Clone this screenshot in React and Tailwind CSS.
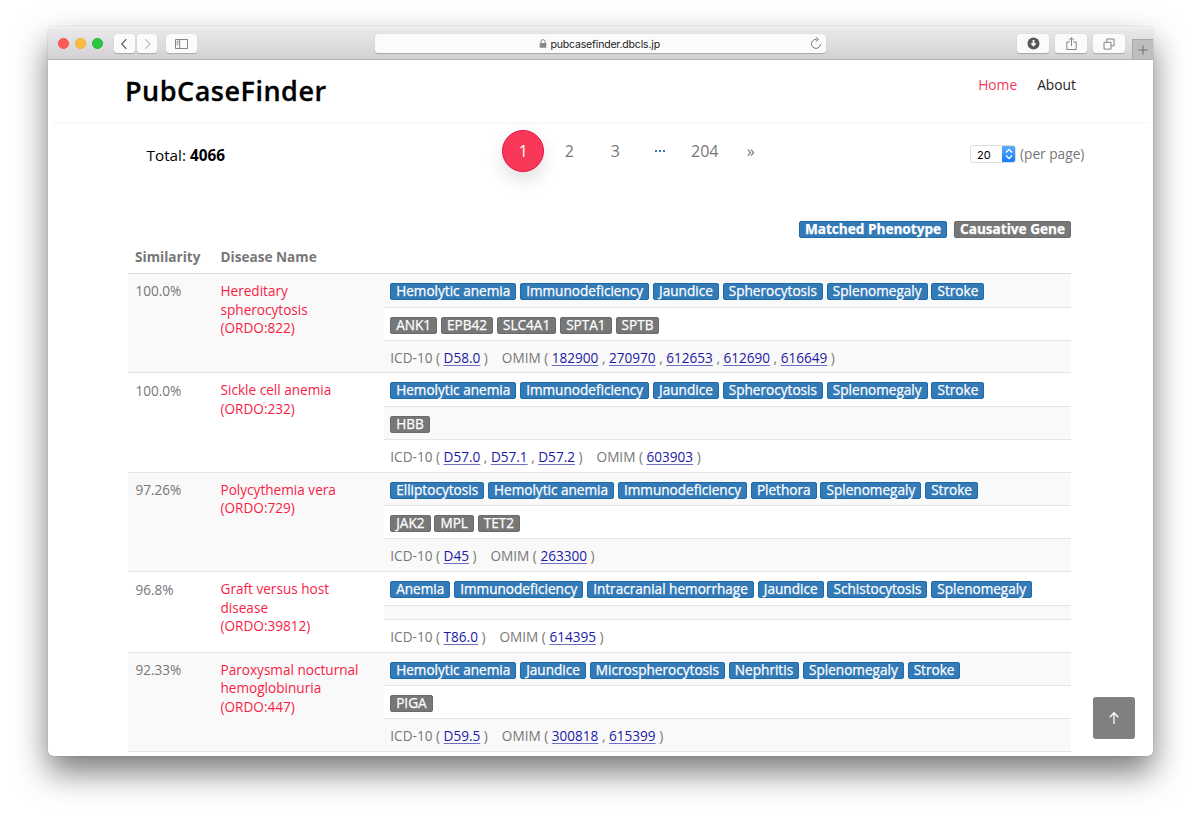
import React from "react";

const rows = [
  {
    similarity: "100.0%",
    name: ["Hereditary", "spherocytosis", "(ORDO:822)"],
    phenotypes: ["Hemolytic anemia", "Immunodeficiency", "Jaundice", "Spherocytosis", "Splenomegaly", "Stroke"],
    genes: ["ANK1", "EPB42", "SLC4A1", "SPTA1", "SPTB"],
    icd: ["D58.0"],
    omim: ["182900", "270970", "612653", "612690", "616649"],
  },
  {
    similarity: "100.0%",
    name: ["Sickle cell anemia", "(ORDO:232)"],
    phenotypes: ["Hemolytic anemia", "Immunodeficiency", "Jaundice", "Spherocytosis", "Splenomegaly", "Stroke"],
    genes: ["HBB"],
    icd: ["D57.0", "D57.1", "D57.2"],
    omim: ["603903"],
  },
  {
    similarity: "97.26%",
    name: ["Polycythemia vera", "(ORDO:729)"],
    phenotypes: ["Elliptocytosis", "Hemolytic anemia", "Immunodeficiency", "Plethora", "Splenomegaly", "Stroke"],
    genes: ["JAK2", "MPL", "TET2"],
    icd: ["D45"],
    omim: ["263300"],
  },
  {
    similarity: "96.8%",
    name: ["Graft versus host", "disease", "(ORDO:39812)"],
    phenotypes: ["Anemia", "Immunodeficiency", "Intracranial hemorrhage", "Jaundice", "Schistocytosis", "Splenomegaly"],
    genes: [],
    icd: ["T86.0"],
    omim: ["614395"],
  },
  {
    similarity: "92.33%",
    name: ["Paroxysmal nocturnal", "hemoglobinuria", "(ORDO:447)"],
    phenotypes: ["Hemolytic anemia", "Jaundice", "Microspherocytosis", "Nephritis", "Splenomegaly", "Stroke"],
    genes: ["PIGA"],
    icd: ["D59.5"],
    omim: ["300818", "615399"],
  },
];

function Tag({ children, gene }) {
  return (
    <span
      className={
        "block h-[17px] rounded-[2px] border px-[5px] text-[13.6px] leading-[14px] whitespace-nowrap text-white [-webkit-text-stroke:0.25px_white] " +
        (gene ? "border-[#6b6b6b] bg-[#777777]" : "border-[#1c6bab] bg-[#337ab7]")
      }
    >
      {children}
    </span>
  );
}

function Codes({ label, codes }) {
  return (
    <span className="whitespace-pre">
      {label} ({" "}
      {codes.map((c, i) => (
        <React.Fragment key={c}>
          {i > 0 && " , "}
          <a className="text-[#1a1aa6] underline decoration-[#6f6fc6] decoration-1 underline-offset-[1.5px]">{c}</a>
        </React.Fragment>
      ))}
      {" )"}
    </span>
  );
}

function ToolButton({ className, children }) {
  return (
    <div className={"flex h-[19px] items-center justify-center rounded-[3px] bg-[#fbfbfb] shadow-[0_0.5px_1px_rgba(0,0,0,0.22)] " + className}>
      {children}
    </div>
  );
}

function TitleBar() {
  return (
    <div className="flex h-[33px] shrink-0 items-start rounded-t-[5px] border-t border-b border-t-[#f8f8f8] border-b-[#b3b1b3] bg-linear-to-b from-[#ebe9eb] to-[#d3d1d3] pt-[6px] pl-[10px]">
      <div className="flex h-[19px] items-center gap-[6px]">
        <span className="size-[11px] rounded-full border border-[#f2504b] bg-[#fc5b57]" />
        <span className="size-[11px] rounded-full border border-[#f3af35] bg-[#fdbc40]" />
        <span className="size-[11px] rounded-full border border-[#1db537] bg-[#2ac840]" />
      </div>
      <ToolButton className="ml-[11px] w-[21px]">
        <svg width="9" height="12" viewBox="0 0 9 12" fill="none" stroke="#555" strokeWidth="1.1"><path d="M6.3 1.2 1.7 6l4.6 4.8" /></svg>
      </ToolButton>
      <ToolButton className="ml-[2px] w-[20px]">
        <svg width="9" height="12" viewBox="0 0 9 12" fill="none" stroke="#bababa" strokeWidth="1.1"><path d="M2.2 1.2 7 6l-4.8 4.8" /></svg>
      </ToolButton>
      <ToolButton className="ml-[9px] w-[31px]">
        <svg width="13" height="10" viewBox="0 0 13 10" fill="none" stroke="#777" strokeWidth="0.9"><path d="M.5.5h12v9H.5zM4.7.5v9M1.7 2.2h1.7M1.7 3.8h1.7M1.7 5.4h1.7" /></svg>
      </ToolButton>
      <div className="ml-[178px] flex h-[19px] w-[451px] items-center rounded-[3px] bg-[#fbfbfb] pl-[164px] shadow-[0_0.5px_1px_rgba(0,0,0,0.22)]">
        <svg width="8" height="9" viewBox="0 0 8 9"><rect x="0.7" y="4" width="6.6" height="4.8" rx="0.6" fill="#888" /><path d="M2 4.2V2.6a2 2 0 0 1 4 0v1.6" fill="none" stroke="#888" strokeWidth="1" /></svg>
        <span className="ml-[3.5px] w-[109px] pt-px font-[Inter,sans-serif] text-[10.5px] leading-[19px] tracking-[-0.17px] whitespace-nowrap text-[#222]">pubcasefinder.dbcls.jp</span>
        <svg className="ml-[150px]" width="12" height="13" viewBox="0 0 12 13" fill="none" stroke="#777" strokeWidth="1"><path d="M6.6 2.4A4.5 4.5 0 1 0 10.5 7" /><path d="M5.8.4 8.6 2.5 5.8 4.6" /></svg>
      </div>
      <ToolButton className="ml-[191px] w-[32px]">
        <svg width="13" height="13" viewBox="0 0 13 13"><circle cx="6.5" cy="6.5" r="6" fill="#575757" /><path d="M6.5 3v5" stroke="#fff" strokeWidth="1.8" /><path d="M3.4 6.3h6.2L6.5 9.8z" fill="#fff" /></svg>
      </ToolButton>
      <ToolButton className="ml-[6px] w-[32px]">
        <svg width="11" height="14" viewBox="0 0 11 14" fill="none" stroke="#777" strokeWidth="0.9"><path d="M3.8 5H.8v7.5h9.4V5h-3M5.5 9V1M3 3.2 5.5.8 8 3.2" /></svg>
      </ToolButton>
      <ToolButton className="ml-[6px] w-[32px]">
        <svg width="12" height="12" viewBox="0 0 12 12" fill="none" stroke="#777" strokeWidth="0.9"><path d="M1 4.3h7v6.8H1zM3.8 4.3V1h7.2v6.8H8" /></svg>
      </ToolButton>
      <div className="mt-[5px] ml-auto flex h-[20px] w-[21px] items-center justify-center border-t border-l border-[#aaa8aa] bg-[#bfbdbf]">
        <svg width="10" height="10" viewBox="0 0 10 10" stroke="#6e6e6e" strokeWidth="1"><path d="M5 .5v9M.5 5h9" /></svg>
      </div>
    </div>
  );
}

export default function App() {
  return (
    <div className="h-[824px] w-[1200px] overflow-hidden bg-white pt-[27px] pl-[48px] font-['Open_Sans',sans-serif] text-[#777]">
      <div className="flex h-[729px] w-[1105px] flex-col rounded-[5px] bg-white shadow-[0_0_1px_rgba(0,0,0,0.5),0_16px_33px_rgba(0,0,0,0.53)]">
        <TitleBar />
        <header className="mx-[4px] flex h-[64px] shrink-0 justify-between border-b-2 border-[#f9f9f9] pr-[73px] pl-[73px]">
          <h1 className="pt-[13px] text-[27px] leading-[36px] font-semibold tracking-[0.5px] text-black [-webkit-text-stroke:0.3px_black]">PubCaseFinder</h1>
          <nav className="flex gap-[20px] pt-[15px] text-[13.8px] leading-[20px]">
            <a className="text-[#f73859]">Home</a>
            <a className="text-[#222]">About</a>
          </nav>
        </header>

        <div className="flex h-[97px] shrink-0 items-start">
          <div className="w-[354px] pt-[21px] pl-[98.5px] text-[15.3px] leading-[20px] text-black">
            Total: <b className="font-bold">4066</b>
          </div>
          <div className="mt-[5.5px] ml-[100.3px] flex h-[42px] w-[419.7px] items-center text-[16px]">
            <span className="flex size-[42px] items-center justify-center rounded-full border border-[#ec0f47] bg-[#f73859] text-white shadow-[0_8px_18px_rgba(0,0,0,0.13)]">1</span>
            <span className="w-[50px] text-center">2</span>
            <span className="w-[42px] text-center">3</span>
            <span className="flex h-[2px] w-[47px] justify-center gap-[2px]">
              <i className="size-[2px] bg-[#337ab7]" />
              <i className="size-[2px] bg-[#337ab7]" />
              <i className="size-[2px] bg-[#337ab7]" />
            </span>
            <span className="w-[43px] text-center">204</span>
            <span className="w-[49px] text-center">»</span>
          </div>
          <div className="mt-[19px] ml-[48px] flex h-[22px] items-center">
            <div className="flex h-[18px] w-[46px] items-stretch overflow-hidden rounded-[3px] border border-[#ddd] bg-white">
              <span className="flex-1 pl-[6px] font-[Inter,sans-serif] text-[11px] leading-[18px] text-black">20</span>
              <span className="-mr-px flex w-[14px] items-center justify-center bg-linear-to-b from-[#5aacfb] to-[#0f7bfb]">
                <svg width="8" height="12" viewBox="0 0 8 12" fill="none" stroke="#fff" strokeWidth="1.3"><path d="M1 4.5 4 1.5l3 3M1 7.5l3 3 3-3" /></svg>
              </span>
            </div>
            <span className="ml-[4px] text-[13.7px] leading-[20px]">(per page)</span>
          </div>
        </div>

        <div className="ml-[80px] flex w-[943px] shrink-0 flex-col text-[13.6px]">
          <div className="flex h-[17px] justify-end gap-[7px] *:font-bold">
            <Tag>Matched Phenotype</Tag>
            <Tag gene>Causative Gene</Tag>
          </div>
          <div className="flex h-[35.9px] border-b border-[#ddd] pt-[8.5px] pl-[7px] leading-[20px] font-bold shadow-[0_0.5px_0_#ddd]">
            <span className="w-[85.5px]">Similarity</span>
            <span>Disease Name</span>
          </div>
          {rows.map((row, n) => {
            const odd = n % 2 === 0;
            const shade = odd ? "bg-[#f9f9f9]" : "bg-white";
            const inner = odd ? "bg-white" : "bg-[#f9f9f9]";
            return (
              <div key={n} className={"flex border-b border-[#e4e4e4] " + shade}>
                <div className="w-[92.5px] pt-[7.5px] pl-[7.4px] leading-[19px]">{row.similarity}</div>
                <div className="w-[163.5px] pt-[8px] leading-[18.7px] text-[#f71d45]">
                  {row.name.map((line) => (
                    <div key={line} className="whitespace-nowrap">{line}</div>
                  ))}
                </div>
                <div className="flex-1">
                  <div className="flex h-[32.7px] gap-[3.9px] pt-[9px] pl-[6.2px]">
                    {row.phenotypes.map((p) => <Tag key={p}>{p}</Tag>)}
                  </div>
                  <div className={"flex gap-[3.9px] border-t border-[#e4e4e4] pt-[9px] pl-[6.2px] " + inner + (row.genes.length ? " h-[33.1px]" : " h-[14.3px]")}>
                    {row.genes.map((g) => <Tag key={g} gene>{g}</Tag>)}
                  </div>
                  <div className="flex h-[32.6px] gap-[14px] border-t border-[#e4e4e4] pt-[7px] pl-[6.3px] leading-[19px]">
                    <Codes label="ICD-10" codes={row.icd} />
                    <Codes label="OMIM" codes={row.omim} />
                  </div>
                </div>
              </div>
            );
          })}
        </div>
      </div>
      <button className="absolute top-[697px] left-[1093px] flex size-[42px] items-center justify-center rounded-[3px] bg-[#808080]">
        <svg width="12" height="14" viewBox="0 0 12 14" fill="none" stroke="#fff" strokeWidth="1.3"><path d="M6 13V2M1.8 6.2 6 1.8l4.2 4.4" /></svg>
      </button>
    </div>
  );
}
